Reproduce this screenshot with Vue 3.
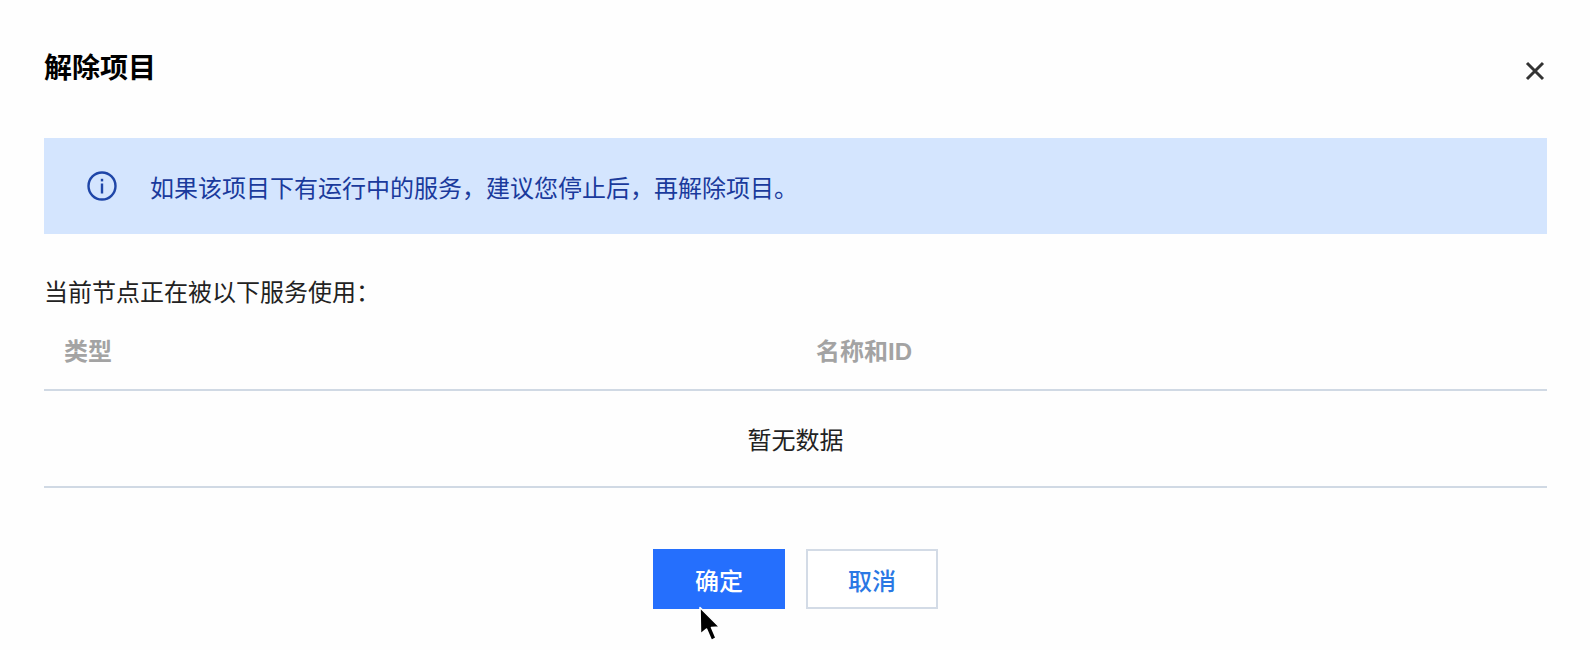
<script setup>
const headers = ['类型', '名称和ID']
</script>

<template>
  <div class="dialog">
    <header class="head">
      <h1 class="title">解除项目</h1>
      <button class="close" aria-label="关闭">
        <svg width="20" height="20" viewBox="0 0 20 20"><path d="M2 2L18 18M18 2L2 18" stroke="#333" stroke-width="3" fill="none"/></svg>
      </button>
    </header>
    <div class="alert">
      <svg class="info" width="30" height="30" viewBox="0 0 30 30">
        <circle cx="15" cy="15" r="13.5" stroke="#1f46a8" stroke-width="2.4" fill="none"/>
        <rect x="13.8" y="12.5" width="2.4" height="10" fill="#1f46a8"/>
        <rect x="13.8" y="7.8" width="2.4" height="2.6" fill="#1f46a8"/>
      </svg>
      <span>如果该项目下有运行中的服务，建议您停止后，再解除项目。</span>
    </div>
    <p class="intro">当前节点正在被以下服务使用：</p>
    <div class="thead">
      <div v-for="h in headers" :key="h" class="th">{{ h }}</div>
    </div>
    <div class="empty">暂无数据</div>
    <footer class="foot">
      <button class="btn primary">确定</button>
      <button class="btn">取消</button>
      <svg class="cursor" width="24" height="36" viewBox="0 0 24 36">
        <path d="M2 1.5L2.5 28L8.5 23L13.5 34.5L18 32L13.5 21.5L21.5 21Z" fill="#000" stroke="#fff" stroke-width="1.6" stroke-linejoin="round"/>
      </svg>
    </footer>
  </div>
</template>

<style>
html, body { margin: 0; background: #fefefe; }
</style>

<style scoped>
.dialog {
  box-sizing: border-box;
  width: 1590px;
  height: 650px;
  padding: 0 43px 0 44px;
  overflow: hidden;
  font-family: "Liberation Sans", "Noto Sans CJK SC", sans-serif;
  font-size: 24px;
  color: #222;
  background: #fefefe;
}
.head {
  display: flex;
  align-items: center;
  justify-content: space-between;
  height: 138px;
  box-sizing: border-box;
}
.title {
  margin: 0;
  font-size: 28px;
  line-height: 40px;
  font-weight: 700;
  color: #000;
}
.close {
  display: flex;
  padding: 0;
  border: 0;
  background: none;
  margin-top: 4px;
  margin-right: 2px;
}
.alert {
  display: flex;
  align-items: center;
  gap: 33px;
  height: 96px;
  padding-left: 43px;
  background: #d4e5fe;
  color: #1a3a9c;
  font-size: 24px;
}
.info { flex: none; }
.intro {
  margin: 0;
  padding-top: 42px;
  line-height: 34px;
}
.thead {
  display: grid;
  grid-template-columns: 751px 1fr;
  height: 81px;
  align-items: center;
  border-bottom: 2px solid #d0d9e4;
  box-sizing: border-box;
}
.th {
  padding-left: 20px;
  font-weight: 700;
  color: #a3a3a3;
}
.th + .th { padding-left: 21px; }
.empty {
  height: 97px;
  display: flex;
  align-items: center;
  justify-content: center;
  border-bottom: 2px solid #d0d9e4;
  box-sizing: border-box;
}
.foot {
  position: relative;
  display: flex;
  justify-content: center;
  gap: 21px;
  padding: 61px 0 0 0;
}
.btn {
  box-sizing: border-box;
  width: 132px;
  height: 60px;
  padding: 0;
  border: 2px solid #d3dbe6;
  background: #fff;
  color: #2a78e4;
  font: inherit;
  font-weight: 500;
}
.primary {
  border: 0;
  background: #256ffd;
  color: #fff;
}
.cursor {
  position: absolute;
  left: 654px;
  top: 118px;
}
</style>
